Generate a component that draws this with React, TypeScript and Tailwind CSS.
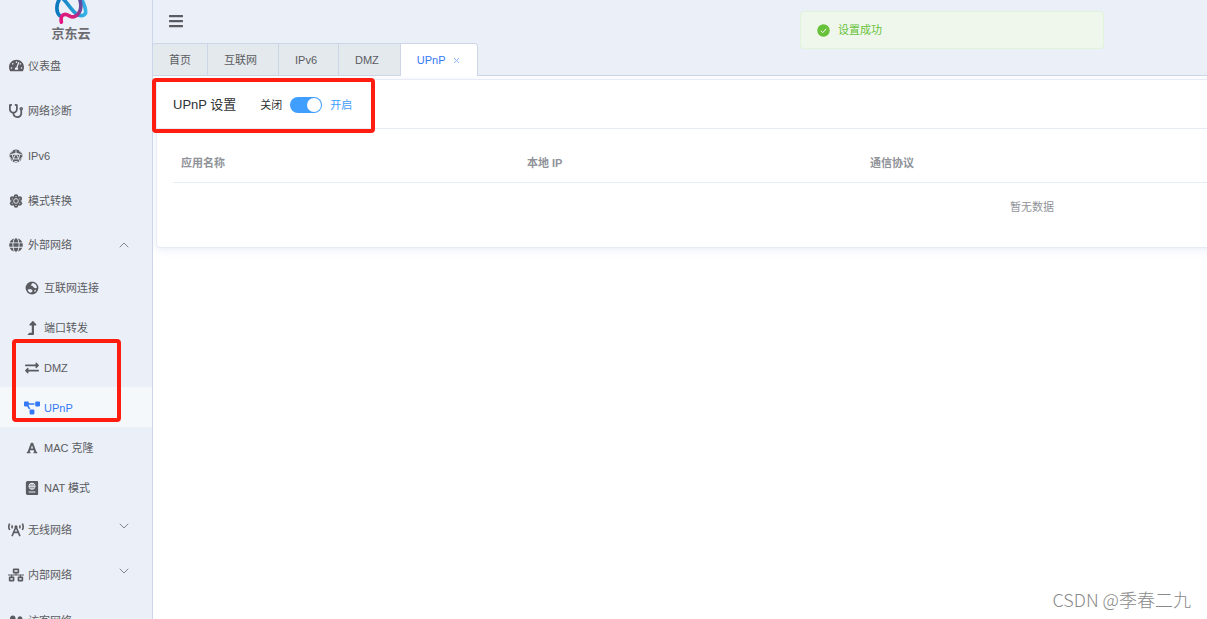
import { useState, type ReactNode } from 'react';
import {
  FaTachometerAlt, FaStethoscope, FaGlobe, FaLevelUpAlt, FaExchangeAlt,
  FaProjectDiagram, FaFont, FaPassport, FaBroadcastTower, FaNetworkWired, FaUserFriends, FaBars,
} from 'react-icons/fa';
import { ChevronDown, ChevronUp, X } from 'lucide-react';

function Polyhedron() {
  return (
    <svg viewBox="0 0 24 24" className="size-3.5">
      <circle cx="12" cy="12" r="11" fill="currentColor" />
      <path
        d="M12 2v5M5 9l-3 1M19 9l3 1M7.500 17l-2 4M16.500 17l2 4M12 7L5.500 9l2 8h9l2-8zM12 7l-4.500 10M12 7l4.500 10M5.500 9h13M3 6l4-3M21 6l-4-3M2 14l2 4M22 14l-2 4M9 21.500h6"
        fill="none"
        stroke="#ebeff7"
        strokeWidth="1.5"
      />
    </svg>
  );
}

function GearFlower() {
  return (
    <svg viewBox="0 0 24 24" className="size-3.5" fill="currentColor">
      <circle cx="12" cy="4.5" r="4" />
      <circle cx="18.5" cy="8" r="4" />
      <circle cx="18.5" cy="16" r="4" />
      <circle cx="12" cy="19.5" r="4" />
      <circle cx="5.5" cy="16" r="4" />
      <circle cx="5.5" cy="8" r="4" />
      <circle cx="12" cy="12" r="7.5" />
      <circle cx="12" cy="12" r="4" fill="none" stroke="#ebeff7" strokeWidth="1.5" />
      <g fill="#ebeff7">
        <circle cx="12" cy="4.5" r="0.9" /><circle cx="18.5" cy="8" r="0.9" /><circle cx="18.5" cy="16" r="0.9" />
        <circle cx="12" cy="19.5" r="0.9" /><circle cx="5.5" cy="16" r="0.9" /><circle cx="5.5" cy="8" r="0.9" />
      </g>
    </svg>
  );
}

function Earth() {
  return (
    <svg viewBox="0 0 24 24" className="size-3.5">
      <circle cx="12" cy="12" r="11" fill="currentColor" />
      <g fill="#ebeff7">
        <path d="M13 3.500c4 .3 7 3.500 7.500 7.500l-2 1.500-3-1-2.500-3-2.500-.5.5-2.500z" />
        <path d="M4.500 15l3.500-1.500 4 1.500 1 2.500-3 2.500C7.500 20 5.500 18 4.500 15z" />
        <path d="M16.500 15.500l2.500-.5-1 3-2 1z" />
      </g>
    </svg>
  );
}

function Logo() {
  return (
    <svg viewBox="0 0 36 27" className="h-[27px] w-9" fill="none" strokeWidth="3.8" strokeLinecap="round" strokeLinejoin="round">
      <defs>
        <linearGradient id="ribbon" gradientUnits="userSpaceOnUse" x1="6" y1="24" x2="28" y2="0">
          <stop offset="0" stopColor="#e5127d" />
          <stop offset="0.45" stopColor="#d4217f" />
          <stop offset="0.75" stopColor="#74479a" />
          <stop offset="1" stopColor="#5a4fa2" />
        </linearGradient>
        <linearGradient id="wave" gradientUnits="userSpaceOnUse" x1="2" y1="0" x2="34" y2="0">
          <stop offset="0" stopColor="#0b76bd" />
          <stop offset="1" stopColor="#35b4e8" />
        </linearGradient>
      </defs>
      <path d="M6 16C2 12 3 4 6-1M10-1c5 5 8 11 13 15 4 3 8 3 10 0 1-4-1-9-4-15" stroke="url(#wave)" />
      <path d="M8 23c-1-6 1-8 4-8 4 0 6 4 10 2 5-2 8-9 5-18" stroke="url(#ribbon)" />
    </svg>
  );
}

type Entry = { label: string; icon: ReactNode; open?: boolean; children?: Entry[]; active?: boolean };

const menu: Entry[] = [
  { label: '仪表盘', icon: <FaTachometerAlt size={15} /> },
  { label: '网络诊断', icon: <FaStethoscope size={14} /> },
  { label: 'IPv6', icon: <Polyhedron /> },
  { label: '模式转换', icon: <GearFlower /> },
  {
    label: '外部网络', icon: <FaGlobe size={14} />, open: true,
    children: [
      { label: '互联网连接', icon: <Earth /> },
      { label: '端口转发', icon: <FaLevelUpAlt size={14} /> },
      { label: 'DMZ', icon: <FaExchangeAlt size={14} /> },
      { label: 'UPnP', icon: <FaProjectDiagram size={16} />, active: true },
      { label: 'MAC 克隆', icon: <FaFont size={12} /> },
      { label: 'NAT 模式', icon: <FaPassport size={14} /> },
    ],
  },
  { label: '无线网络', icon: <FaBroadcastTower size={16} />, open: false },
  { label: '内部网络', icon: <FaNetworkWired size={16} />, open: false },
  { label: '访客网络', icon: <FaUserFriends size={16} /> },
];

function Sidebar() {
  return (
    <aside className="w-[153px] shrink-0 overflow-hidden border-r border-[#ccd6e8] bg-[#ebeff7]">
      <div className="flex h-[42px] flex-col items-center pr-2.5">
        <Logo />
        <span className="text-[13px] leading-4 font-bold text-[#6b6b70]">京东云</span>
      </div>
      <nav>
        <ul>
          {menu.map((item) => (
            <li key={item.label}>
              <a
                href="#"
                className={`flex h-[45px] items-center pr-5 pl-2 ${item.open === undefined ? 'pt-0.5' : 'pt-px'}`}
              >
                <span className="flex w-4 shrink-0 justify-center">{item.icon}</span>
                <span className="ml-1 whitespace-nowrap">{item.label}</span>
                {item.open !== undefined && (
                  <span className="ml-auto text-[#83868c]">
                    {item.open ? (
                      <ChevronUp size={16} strokeWidth={1.5} />
                    ) : (
                      <ChevronDown size={16} strokeWidth={1.5} className="mb-2" />
                    )}
                  </span>
                )}
              </a>
              {item.children && (
                <ul>
                  {item.children.map((sub) => (
                    <li key={sub.label}>
                      <a
                        href="#"
                        className={`flex h-10 items-center pt-0.5 pl-6 ${sub.active ? 'bg-[#f4f8fb] text-[#3478f6]' : ''}`}
                      >
                        <span className="flex w-4 shrink-0 justify-center">{sub.icon}</span>
                        <span className="ml-1 whitespace-nowrap">{sub.label}</span>
                      </a>
                    </li>
                  ))}
                </ul>
              )}
            </li>
          ))}
        </ul>
      </nav>
    </aside>
  );
}

const tabs = [
  { label: '首页', pad: 'px-4' },
  { label: '互联网', pad: 'pr-[21px] pl-4' },
  { label: 'IPv6', pad: 'pr-[21px] pl-4' },
  { label: 'DMZ', pad: 'pr-[21px] pl-4' },
  { label: 'UPnP', pad: 'px-4' },
];

function Tabs() {
  return (
    <div className="flex h-[33px] border-b border-[#ccd6e6]">
      <div role="tablist" className="-mb-px -ml-px flex overflow-hidden rounded-t border border-b-0 border-[#ccd6e6]">
        {tabs.map(({ label, pad }) => {
          const active = label === 'UPnP';
          return (
            <button
              key={label}
              role="tab"
              aria-selected={active}
              className={`flex items-center border-[#ccd6e6] not-last:border-r ${pad} ${
                active ? 'bg-white text-[#3478f6]' : 'border-b bg-[#e4e9ed]'
              }`}
            >
              {label}
              {active && <X size={9} strokeWidth={2.5} className="ml-1.5 text-[#86b0f9]" />}
            </button>
          );
        })}
      </div>
    </div>
  );
}

export default function App() {
  const [enabled, setEnabled] = useState(true);
  return (
    <div className="relative flex h-screen overflow-hidden bg-white font-['Liberation_Sans','Noto_Sans_CJK_SC',sans-serif] text-[11px] leading-4 text-[#5a5c61]">
      <Sidebar />
      <main className="min-w-0 flex-1 overflow-hidden">
        <header className="bg-[#ebeff7]">
          <div className="flex h-[43px] items-center px-[15px] pb-0.5">
            <button aria-label="Menu"><FaBars size={16} /></button>
          </div>
          <Tabs />
        </header>
        <section className="mt-[3px] ml-[3px] min-w-[1752px] rounded border border-[#e6ebf5] bg-white shadow-[0_2px_8px_rgba(50,90,200,0.1)]">
          <div className="flex h-[49px] items-center border-b border-[#e6ebf5] px-4 pt-0.5 text-[#303133]">
            <h1 className="text-[13px]">UPnP 设置</h1>
            <label className="ml-6 flex items-center gap-2">
              <span>关闭</span>
              <input
                type="checkbox"
                role="switch"
                checked={enabled}
                onChange={(e) => setEnabled(e.target.checked)}
                className="peer sr-only"
              />
              <span className="flex h-4 w-8 rounded-full bg-[#c0c4cc] p-px peer-checked:justify-end peer-checked:bg-[#409eff]">
                <span className="size-3.5 rounded-full bg-white" />
              </span>
              <span className="peer-checked:text-[#409eff]">开启</span>
            </label>
          </div>
          <div className="p-4">
            <table className="w-full table-fixed text-left text-[#909399]">
              <thead>
                <tr className="h-[37px] border-b border-[#e6ebf5]">
                  <th className="w-[346px] px-2 font-bold">应用名称</th>
                  <th className="w-[343px] px-2 font-bold">本地 IP</th>
                  <th className="px-2 font-bold">通信协议</th>
                </tr>
              </thead>
              <tbody>
                <tr>
                  <td colSpan={3} className="h-[49px] text-center">暂无数据</td>
                </tr>
              </tbody>
            </table>
          </div>
        </section>
      </main>

      <div role="status" className="absolute top-[11px] left-[800px] flex h-[38px] w-[304px] items-center gap-2 rounded border border-[#e1f3d8] bg-[#eff7ec] px-4 text-[#67c23a]">
        <svg viewBox="0 0 24 24" className="size-[13px]">
          <circle cx="12" cy="12" r="11.5" fill="currentColor" />
          <path d="M7 12.5l3.500 3.500 6.500-7" fill="none" stroke="#fff" strokeWidth="1.8" />
        </svg>
        设置成功
      </div>
      <div className="pointer-events-none absolute top-[78px] left-[152px] h-[55px] w-[223px] rounded border-4 border-[#ff1d10]" />
      <div className="pointer-events-none absolute top-[339px] left-3 h-[83px] w-[109px] rounded border-4 border-[#ff1d10]" />
      <div className="pointer-events-none absolute right-4 bottom-2 font-['Noto_Sans_CJK_SC',sans-serif] text-[18px] leading-6 font-light text-[#8a8a8a]">
        CSDN @季春二九
      </div>
    </div>
  );
}
